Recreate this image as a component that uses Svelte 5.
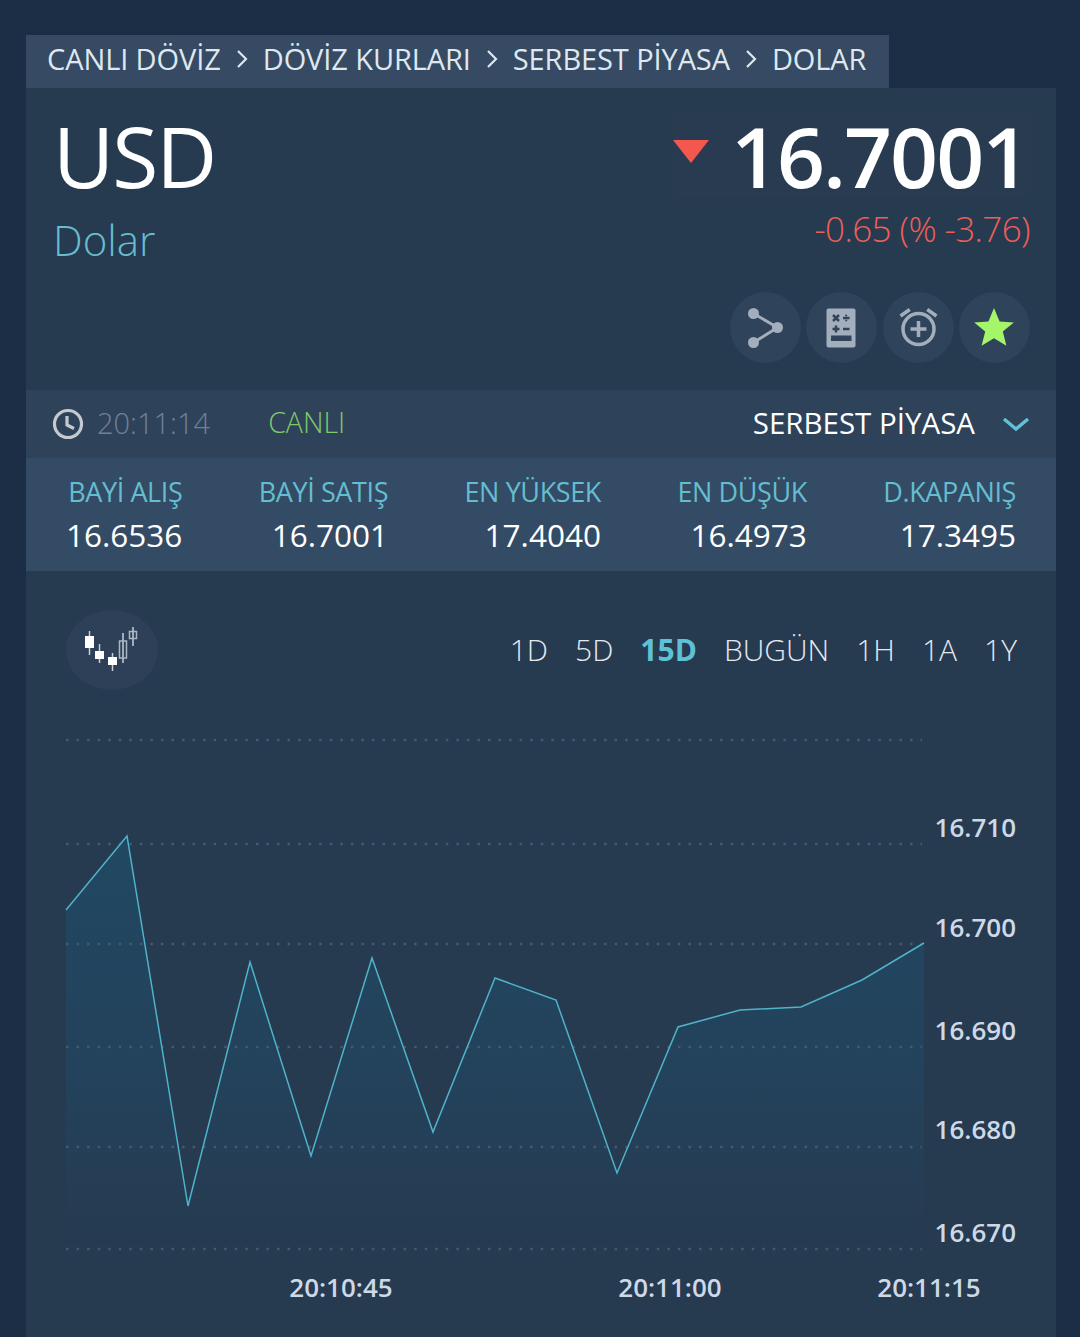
<script>
    const crumbs = ['CANLI DÖVİZ', 'DÖVİZ KURLARI', 'SERBEST PİYASA', 'DOLAR'];
    const stats = [
        { label: 'BAYİ ALIŞ', value: '16.6536' },
        { label: 'BAYİ SATIŞ', value: '16.7001' },
        { label: 'EN YÜKSEK', value: '17.4040' },
        { label: 'EN DÜŞÜK', value: '16.4973' },
        { label: 'D.KAPANIŞ', value: '17.3495' }
    ];
    const ranges = ['1D', '5D', '15D', 'BUGÜN', '1H', '1A', '1Y'];
    const points = [
        [66, 910], [127, 836], [188, 1206], [250, 962], [311, 1156],
        [372, 958], [433, 1132], [495, 978], [556, 1000], [617, 1173],
        [678, 1027], [740, 1010], [801, 1007], [862, 980], [924, 943]
    ];
    const line = points.map((p) => p.join(',')).join(' ');
    const area = `66,1250 ${line} 924,1250`;
    const grid = [740, 844, 944, 1047, 1147, 1249];
    const yLabels = [
        { y: 837, text: '16.710' },
        { y: 937, text: '16.700' },
        { y: 1040, text: '16.690' },
        { y: 1139, text: '16.680' },
        { y: 1242, text: '16.670' }
    ];
    const xLabels = [
        { x: 341, text: '20:10:45' },
        { x: 670, text: '20:11:00' },
        { x: 929, text: '20:11:15' }
    ];
    const candles = [
        { x: 85, y: 636, w: 9, h: 12, top: 631, bottom: 655, solid: true },
        { x: 95, y: 651, w: 9, h: 8, top: 644, bottom: 663, solid: true },
        { x: 108, y: 657, w: 9, h: 8, top: 653, bottom: 671, solid: true },
        { x: 119.5, y: 641, w: 7, h: 17, top: 633, bottom: 663, solid: false },
        { x: 129.5, y: 631.5, w: 7, h: 7, top: 627, bottom: 646, solid: false }
    ];
</script>

<div class="page">
    <nav class="crumbs">
        {#each crumbs as crumb, i}
            {#if i > 0}
                <svg class="sep" width="12" height="20" viewBox="0 0 12 20"><path d="M2 2l8 8-8 8" /></svg>
            {/if}
            <span>{crumb}</span>
        {/each}
    </nav>

    <main class="panel">
        <section class="head">
            <div class="name">
                <div class="code">USD</div>
                <div class="title">Dolar</div>
            </div>
            <div class="quote">
                <div class="price-box">
                    <span class="down"></span>
                    <span class="price">16.7001</span>
                </div>
                <div class="change">-0.65 (% -3.76)</div>
                <div class="actions">
                    <button aria-label="Paylaş">
                        <svg width="71" height="71" viewBox="0 0 71 71">
                            <path class="share" d="M23.5 21.5L47.5 35.5L23.5 50.5" />
                            <circle class="gray" cx="23.5" cy="21.5" r="5.5" />
                            <circle class="gray" cx="47.5" cy="35.5" r="5.5" />
                            <circle class="gray" cx="23.5" cy="50.5" r="5.5" />
                        </svg>
                    </button>
                    <button aria-label="Hesap makinesi">
                        <svg width="71" height="71" viewBox="0 0 71 71">
                            <rect class="gray" x="20.5" y="16.5" width="29" height="39" rx="2" />
                            <path class="cut" d="M27 23l6 6M33 23l-6 6M26.500 37h7M30 33.500v7M37 26h6.500M37 37h6.500" />
                            <circle class="dot" cx="40.200" cy="23.500" r="1" />
                            <circle class="dot" cx="40.200" cy="28.500" r="1" />
                            <rect class="dot" x="25" y="43.500" width="20.500" height="5.500" />
                        </svg>
                    </button>
                    <button aria-label="Alarm">
                        <svg width="71" height="71" viewBox="0 0 71 71">
                            <circle class="ring" cx="35.500" cy="37" r="15.500" />
                            <path class="ring" d="M35.500 29v16M27.500 37h16M17.500 24l9.300-6.500M53.500 24l-9.300-6.500" />
                        </svg>
                    </button>
                    <button aria-label="Favori">
                        <svg width="71" height="71" viewBox="0 0 71 71">
                            <path class="star" d="M35 16l5.600 13.400 14.200 1-11 9.200 3.600 14.200L35 46.200l-12.400 7.600 3.600-14.200-11-9.200 14.200-1z" />
                        </svg>
                    </button>
                </div>
            </div>
        </section>

        <section class="status">
            <svg width="32" height="32" viewBox="0 0 32 32" class="clock">
                <circle cx="16" cy="16" r="13.500" />
                <path d="M15 8v9l7 3.500" />
            </svg>
            <span class="time">20:11:14</span>
            <span class="live">CANLI</span>
            <span class="market">SERBEST PİYASA</span>
            <svg class="chev" width="28" height="16" viewBox="0 0 28 16"><path d="M2 3l12 10L26 3" /></svg>
        </section>

        <section class="stats">
            {#each stats as s}
                <div class="stat">
                    <div class="label">{s.label}</div>
                    <div class="value">{s.value}</div>
                </div>
            {/each}
        </section>

        <section class="tools">
            <button class="candle" aria-label="Mum grafik">
                <svg width="92" height="80" viewBox="66 610 92 80">
                    {#each candles as c}
                        <line x1={c.x + c.w / 2} x2={c.x + c.w / 2} y1={c.top} y2={c.bottom} class="wick" />
                        <rect x={c.x} y={c.y} width={c.w} height={c.h} class={c.solid ? 'solid' : 'hollow'} />
                    {/each}
                </svg>
            </button>
            <div class="ranges">
                {#each ranges as r}
                    <span class:on={r === '15D'}>{r}</span>
                {/each}
            </div>
        </section>

        <svg class="chart" width="1030" height="637" viewBox="26 700 1030 637">
            <defs>
                <linearGradient id="fade" x1="0" y1="836" x2="0" y2="1250" gradientUnits="userSpaceOnUse">
                    <stop offset="0" stop-color="#214862" />
                    <stop offset="0.65" stop-color="#24415a" />
                    <stop offset="1" stop-color="#263a50" />
                </linearGradient>
            </defs>
            <polygon points={area} fill="url(#fade)" />
            {#each grid as y}
                <line class="gridline" x1="66" x2="922" y1={y} y2={y} />
            {/each}
            <polyline class="trace" points={line} />
            {#each yLabels as l}
                <text class="axis" x="1016" y={l.y} text-anchor="end">{l.text}</text>
            {/each}
            {#each xLabels as l}
                <text class="axis" x={l.x} y="1297" text-anchor="middle">{l.text}</text>
            {/each}
        </svg>
    </main>
</div>

<style>
    :global(body) {
        background: #1c2e46;
        font-family: "Open Sans", "Noto Sans", sans-serif;
        overflow: hidden;
    }

    .page {
        padding: 35px 24px 0 26px;
        height: 1302px;
    }

    button {
        border: 0;
        padding: 0;
        cursor: pointer;
    }

    .crumbs {
        display: flex;
        align-items: center;
        width: 863px;
        height: 53px;
        box-sizing: border-box;
        padding: 0 0 6px 21px;
        background: #364a63;
        color: #dfe8ef;
        font-size: 29px;
        letter-spacing: -0.1px;
        gap: 15px;
    }

    .sep path {
        fill: none;
        stroke: #dfe8ef;
        stroke-width: 2.200;
    }

    .panel {
        background: #263a50;
        height: 1249px;
        overflow: hidden;
    }

    .head {
        display: flex;
        justify-content: space-between;
        height: 302px;
        box-sizing: border-box;
        padding: 26px 26px 0 27px;
    }

    .code {
        color: #fff;
        font-size: 84px;
        font-weight: 400;
        line-height: 84px;
        letter-spacing: -2px;
    }

    .title {
        color: #65bdd0;
        font-size: 42px;
        font-weight: 300;
        line-height: 50px;
        margin-top: 17px;
    }

    .quote {
        display: flex;
        flex-direction: column;
        align-items: flex-end;
    }

    .price-box {
        display: flex;
        align-items: flex-start;
        width: 357px;
        height: 83px;
        box-sizing: border-box;
        background: #283b51;
    }

    .down {
        width: 0;
        height: 0;
        margin-top: 26px;
        border-left: 18px solid transparent;
        border-right: 18px solid transparent;
        border-top: 23px solid #f4574e;
    }

    .price {
        margin-left: 22px;
        color: #fff;
        font-size: 84px;
        font-weight: 600;
        line-height: 83px;
        letter-spacing: -2px;
    }

    .change {
        margin-top: 9px;
        color: #ee5f58;
        font-size: 35px;
        font-weight: 300;
        line-height: 46px;
        letter-spacing: -0.6px;
    }

    .actions {
        display: flex;
        gap: 5.300px;
        margin-top: 40px;
    }

    .actions button {
        width: 71px;
        height: 71px;
        border-radius: 50%;
        background: #2f435b;
    }

    .gray {
        fill: #a3aebd;
    }

    .share {
        fill: none;
        stroke: #a3aebd;
        stroke-width: 3;
    }

    .cut {
        fill: none;
        stroke: #2f435b;
        stroke-width: 2.500;
    }

    .dot {
        fill: #2f435b;
    }

    .ring {
        fill: none;
        stroke: #a3aebd;
        stroke-width: 3.500;
    }

    .star {
        fill: #a4f56a;
    }

    .status {
        display: flex;
        align-items: center;
        height: 68px;
        padding: 0 26px 0 26px;
        background: #2e4259;
    }

    .status span {
        position: relative;
        top: -2px;
    }

    .clock circle,
    .clock path {
        fill: none;
        stroke: #c4cad0;
        stroke-width: 3.200;
    }

    .time {
        margin-left: 13px;
        color: #6e8199;
        font-size: 29px;
        font-weight: 300;
    }

    .live {
        margin-left: 58px;
        color: #7fc96b;
        font-size: 28.500px;
        font-weight: 300;
    }

    .market {
        margin-left: auto;
        color: #fff;
        font-size: 29.500px;
    }

    .chev {
        margin-left: 27px;
    }

    .chev path {
        fill: none;
        stroke: #5fc1d6;
        stroke-width: 3.500;
    }

    .stats {
        display: flex;
        justify-content: space-between;
        height: 113px;
        box-sizing: border-box;
        padding: 15px 40px 0 40px;
        background: #344b65;
    }

    .stat {
        text-align: right;
    }

    .label {
        color: #65bdd0;
        font-size: 27px;
        line-height: 38px;
        letter-spacing: -0.4px;
    }

    .value {
        margin-top: 4px;
        color: #fff;
        font-size: 31.500px;
        line-height: 40px;
    }

    .tools {
        display: flex;
        align-items: center;
        justify-content: space-between;
        height: 129px;
        box-sizing: border-box;
        padding: 29px 39px 0 40px;
    }

    .candle {
        width: 92px;
        height: 80px;
        border-radius: 50%;
        background: #2d4057;
    }

    .candle svg {
        display: block;
    }

    .wick {
        stroke: #c6cfd9;
        stroke-width: 1.500;
    }

    .solid {
        fill: #fff;
    }

    .hollow {
        fill: none;
        stroke: #aab6c4;
        stroke-width: 1.500;
    }

    .ranges {
        display: flex;
        gap: 27px;
        margin-top: -2px;
        color: #e3e9ef;
        font-size: 30px;
        font-weight: 300;
    }

    .ranges .on {
        color: #5fc1d6;
        font-weight: 700;
    }

    .chart {
        display: block;
    }

    .gridline {
        stroke: #46596f;
        stroke-width: 2.500;
        stroke-dasharray: 2.500 8.050;
    }

    .trace {
        fill: none;
        stroke: #4fb3c9;
        stroke-width: 1.500;
    }

    .axis {
        fill: #cdd9e6;
        font-size: 26px;
        font-weight: 600;
        font-family: "Open Sans", "Noto Sans", sans-serif;
    }
</style>
